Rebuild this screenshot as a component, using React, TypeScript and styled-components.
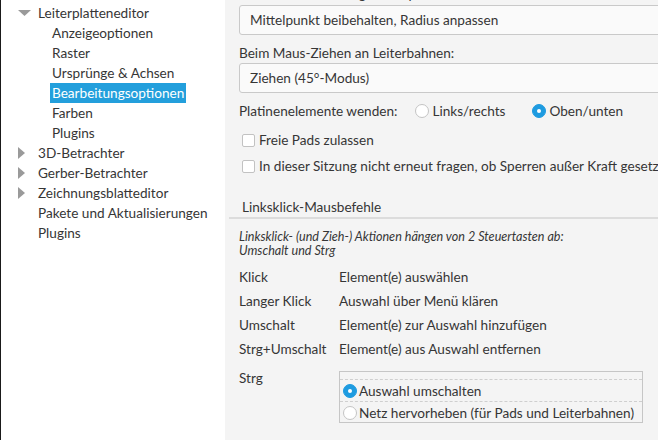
import React, { ReactElement } from 'react';
import styled, { createGlobalStyle } from 'styled-components';

const GlobalStyle = createGlobalStyle`
  html, body {
    margin: 0;
    padding: 0;
    overflow: hidden;
    background: #f4f4f4;
  }
  body {
    font-family: Lato, 'Noto Sans', sans-serif;
    font-size: 13.6px;
    color: #363636;
  }
`;

const Window = styled.div`
  display: flex;
  width: 658px;
  height: 440px;
  overflow: hidden;
`;

/* ---------- tree ---------- */

const Tree = styled.div`
  width: 225px;
  flex-shrink: 0;
  background: #ffffff;
  border-left: 1px solid #1a1a1a;
  padding-top: 3px;
  box-sizing: border-box;
`;

const TreeRow = styled.div<{ $depth: number }>`
  display: flex;
  align-items: center;
  height: 20px;
  padding-left: ${(p) => (p.$depth === 0 ? 11 : 49)}px;
`;

const Expander = styled.span`
  display: flex;
  align-items: center;
  justify-content: center;
  width: 24px;
  height: 20px;
  flex-shrink: 0;
`;

const TreeLabel = styled.span<{ $selected?: boolean }>`
  padding: 0 2px;
  line-height: 20px;
  white-space: nowrap;
  background: ${(p) => (p.$selected ? '#239fdc' : 'transparent')};
  color: ${(p) => (p.$selected ? '#ffffff' : '#363636')};
`;

type Arrow = 'down' | 'right' | 'none';

function TreeArrow({ dir }: { dir: Arrow }): ReactElement | null {
  if (dir === 'none') return <Expander />;
  return (
    <Expander>
      {dir === 'down' ? (
        <svg width="13" height="6" viewBox="0 0 13 6">
          <polygon points="0,0 13,0 6.5,6" fill="#9a9a9a" />
        </svg>
      ) : (
        <svg width="7" height="12" viewBox="0 0 7 12" style={{ marginLeft: -5 }}>
          <polygon points="0,0 7,6 0,12" fill="#9a9a9a" />
        </svg>
      )}
    </Expander>
  );
}

const treeItems: { label: string; depth: number; arrow: Arrow; selected?: boolean }[] = [
  { label: 'Leiterplatteneditor', depth: 0, arrow: 'down' },
  { label: 'Anzeigeoptionen', depth: 1, arrow: 'none' },
  { label: 'Raster', depth: 1, arrow: 'none' },
  { label: 'Ursprünge & Achsen', depth: 1, arrow: 'none' },
  { label: 'Bearbeitungsoptionen', depth: 1, arrow: 'none', selected: true },
  { label: 'Farben', depth: 1, arrow: 'none' },
  { label: 'Plugins', depth: 1, arrow: 'none' },
  { label: '3D-Betrachter', depth: 0, arrow: 'right' },
  { label: 'Gerber-Betrachter', depth: 0, arrow: 'right' },
  { label: 'Zeichnungsblatteditor', depth: 0, arrow: 'right' },
  { label: 'Pakete und Aktualisierungen', depth: 0, arrow: 'none' },
  { label: 'Plugins', depth: 0, arrow: 'none' },
];

/* ---------- settings page ---------- */

const Page = styled.div`
  flex: 1;
  min-width: 0;
  overflow: hidden;
  background: #f4f4f4;
  padding-left: 14px;
  display: flex;
  flex-direction: column;
`;

const CutLabel = styled.div`
  height: 4px;
  overflow: hidden;
  line-height: 18px;
  white-space: nowrap;
  span {
    display: block;
    margin-top: -15px;
  }
`;

const Label = styled.div<{ $top: number }>`
  margin-top: ${(p) => p.$top}px;
  line-height: 18px;
  white-space: nowrap;
`;

const Combo = styled.div`
  width: 460px;
  height: 28px;
  margin-top: 1px;
  box-sizing: content-box;
  display: flex;
  align-items: center;
  padding-left: 10px;
  background: #fafafa;
  border: 1px solid #c9c9c9;
  border-radius: 3px;
  white-space: nowrap;
`;

const RadioRow = styled.div`
  display: flex;
  align-items: center;
  height: 20px;
  margin-top: 8px;
  white-space: nowrap;
`;

const RadioOption = styled.label<{ $gap?: number }>`
  display: flex;
  align-items: center;
  gap: 3px;
  margin-left: ${(p) => p.$gap ?? 0}px;
`;

const RadioDot = styled.span<{ $checked?: boolean }>`
  width: 14px;
  height: 14px;
  box-sizing: border-box;
  border-radius: 50%;
  flex-shrink: 0;
  position: relative;
  background: ${(p) => (p.$checked ? '#1e9be0' : '#ffffff')};
  border: 1px solid ${(p) => (p.$checked ? '#1e9be0' : '#c4c4c4')};
  &::after {
    content: '';
    display: ${(p) => (p.$checked ? 'block' : 'none')};
    position: absolute;
    left: 4px;
    top: 4px;
    width: 4px;
    height: 4px;
    border-radius: 50%;
    background: #ffffff;
  }
`;

const CheckRow = styled.label<{ $top: number }>`
  display: flex;
  align-items: center;
  gap: 4px;
  height: 20px;
  margin-top: ${(p) => p.$top}px;
  padding-left: 3px;
  white-space: nowrap;
`;

const CheckBox = styled.span`
  width: 13px;
  height: 13px;
  box-sizing: border-box;
  flex-shrink: 0;
  background: #ffffff;
  border: 1px solid #c2c2c2;
  border-radius: 2px;
`;

const GroupHeader = styled.div`
  margin-top: 21px;
  margin-left: -10px;
  padding-left: 13px;
  height: 20px;
  line-height: 20px;
  border-bottom: 2px solid #dcdcdc;
  white-space: nowrap;
`;

const Hint = styled.div`
  margin-top: 11px;
  font-size: 12.6px;
  font-style: italic;
  line-height: 14px;
  white-space: nowrap;
`;

const ActionGrid = styled.div`
  display: grid;
  grid-template-columns: 100px 1fr;
  grid-auto-rows: 24px;
  align-items: center;
  margin-top: 7px;
  white-space: nowrap;
`;

const StrgRow = styled.div`
  display: grid;
  grid-template-columns: 100px 304px;
  margin-top: 10px;
`;

const StrgKey = styled.div`
  line-height: 14px;
`;

const StrgBox = styled.div`
  border: 1px solid #c6c6c6;
  padding-top: 7px;
  height: 52px;
  box-sizing: border-box;
`;

const StrgOption = styled.label`
  display: flex;
  align-items: center;
  gap: 2px;
  height: 21px;
  padding-left: 3px;
  border-top: 1px dashed #cfcfcf;
  white-space: nowrap;
`;

const actions: [string, string][] = [
  ['Klick', 'Element(e) auswählen'],
  ['Langer Klick', 'Auswahl über Menü klären'],
  ['Umschalt', 'Element(e) zur Auswahl hinzufügen'],
  ['Strg+Umschalt', 'Element(e) aus Auswahl entfernen'],
];

function App(): ReactElement {
  return (
    <Window>
      <GlobalStyle />
      <Tree>
        {treeItems.map((item, i) => (
          <TreeRow key={i} $depth={item.depth}>
            {item.depth === 0 && <TreeArrow dir={item.arrow} />}
            <TreeLabel $selected={item.selected}>{item.label}</TreeLabel>
          </TreeRow>
        ))}
      </Tree>

      <Page>
        <CutLabel>
          <span>Beim Ziehen von Bogen-Endpunkten:</span>
        </CutLabel>
        <Combo>Mittelpunkt beibehalten, Radius anpassen</Combo>
        <Label $top={9}>Beim Maus-Ziehen an Leiterbahnen:</Label>
        <Combo>Ziehen (45°-Modus)</Combo>

        <RadioRow>
          Platinenelemente wenden:
          <RadioOption $gap={18}>
            <RadioDot />
            Links/rechts
          </RadioOption>
          <RadioOption $gap={27}>
            <RadioDot $checked />
            Oben/unten
          </RadioOption>
        </RadioRow>

        <CheckRow $top={9}>
          <CheckBox />
          Freie Pads zulassen
        </CheckRow>
        <CheckRow $top={6}>
          <CheckBox />
          In dieser Sitzung nicht erneut fragen, ob Sperren außer Kraft gesetzt werden sollen
        </CheckRow>

        <GroupHeader>Linksklick-Mausbefehle</GroupHeader>
        <Hint>
          Linksklick- (und Zieh-) Aktionen hängen von 2 Steuertasten ab:
          <br />
          Umschalt und Strg
        </Hint>

        <ActionGrid>
          {actions.map(([key, desc]) => (
            <React.Fragment key={key}>
              <span>{key}</span>
              <span>{desc}</span>
            </React.Fragment>
          ))}
        </ActionGrid>

        <StrgRow>
          <StrgKey>Strg</StrgKey>
          <StrgBox>
            <StrgOption>
              <RadioDot $checked />
              Auswahl umschalten
            </StrgOption>
            <StrgOption>
              <RadioDot />
              Netz hervorheben (für Pads und Leiterbahnen)
            </StrgOption>
          </StrgBox>
        </StrgRow>
      </Page>
    </Window>
  );
}

export default App;
